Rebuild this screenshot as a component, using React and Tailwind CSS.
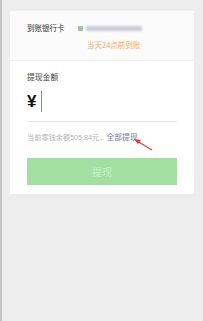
import React from 'react';

function App() {
    return (
        <div
            className="w-[203px] h-[321px] bg-[#ededed] border-l-2 border-[#c4c4c4] pt-[11px] pl-[8px] pr-[9px]"
            style={{ fontFamily: '"Noto Sans CJK SC", "Noto Sans", sans-serif' }}
        >
            <div className="bg-white">
                <div className="bg-[#fbfbfb] h-[50px] pl-[17px] pt-[11px] border-b border-[#f0f0f0]">
                    <div className="flex items-center h-[12px]">
                        <span className="text-[7.5px] leading-none text-[#333]">到账银行卡</span>
                        <div className="ml-[13px] flex items-center gap-[3px]">
                            <div className="w-[5px] h-[5px] bg-[#9cc6a8] blur-[0.5px]"></div>
                            <div className="w-[56px] h-[5px] bg-[#c9cbdc] blur-[1px]"></div>
                        </div>
                    </div>
                    <div className="pl-[60px] mt-[7px] text-[7.5px] leading-none text-[#f7a95a]">当天24点前到账</div>
                </div>
                <div className="px-[17px] pt-[12px] pb-[9px]">
                    <div className="text-[7.8px] leading-none text-[#444]">提现金额</div>
                    <div className="flex items-center h-[21px] mt-[10px]">
                        <span className="text-[17px] leading-none font-bold text-[#111]" style={{ fontFamily: '"Liberation Sans", sans-serif' }}>¥</span>
                        <div className="ml-[5px] w-[1px] h-[21px] bg-[#888]"></div>
                    </div>
                    <div className="mt-[9px] h-px bg-[#e8e8e8]"></div>
                    <div
                        className="relative mt-[12px] flex items-center h-[8px] text-[7.2px] leading-none text-[#b2b2b2] whitespace-nowrap"
                        style={{ fontFamily: '"Liberation Sans", "Noto Sans CJK SC", sans-serif' }}
                    >
                        <span>当前零钱余额505.84元，</span>
                        <span className="text-[#6c7aa6] text-[7.8px]">全部提现</span>
                        <svg className="absolute left-[105px] top-[4px]" width="22" height="14" viewBox="0 0 22 14">
                            <line x1="20" y1="12" x2="5" y2="3" stroke="#e8383d" strokeWidth="1.3" />
                            <polygon points="2,1 9,2 6,6" fill="#e8383d" />
                        </svg>
                    </div>
                    <div className="mt-[16px] h-[27px] bg-[#a2dfa0] flex items-center justify-center text-[10px] text-[#c9efc7]">
                        提现
                    </div>
                </div>
            </div>
        </div>
    );
}

export default App;
